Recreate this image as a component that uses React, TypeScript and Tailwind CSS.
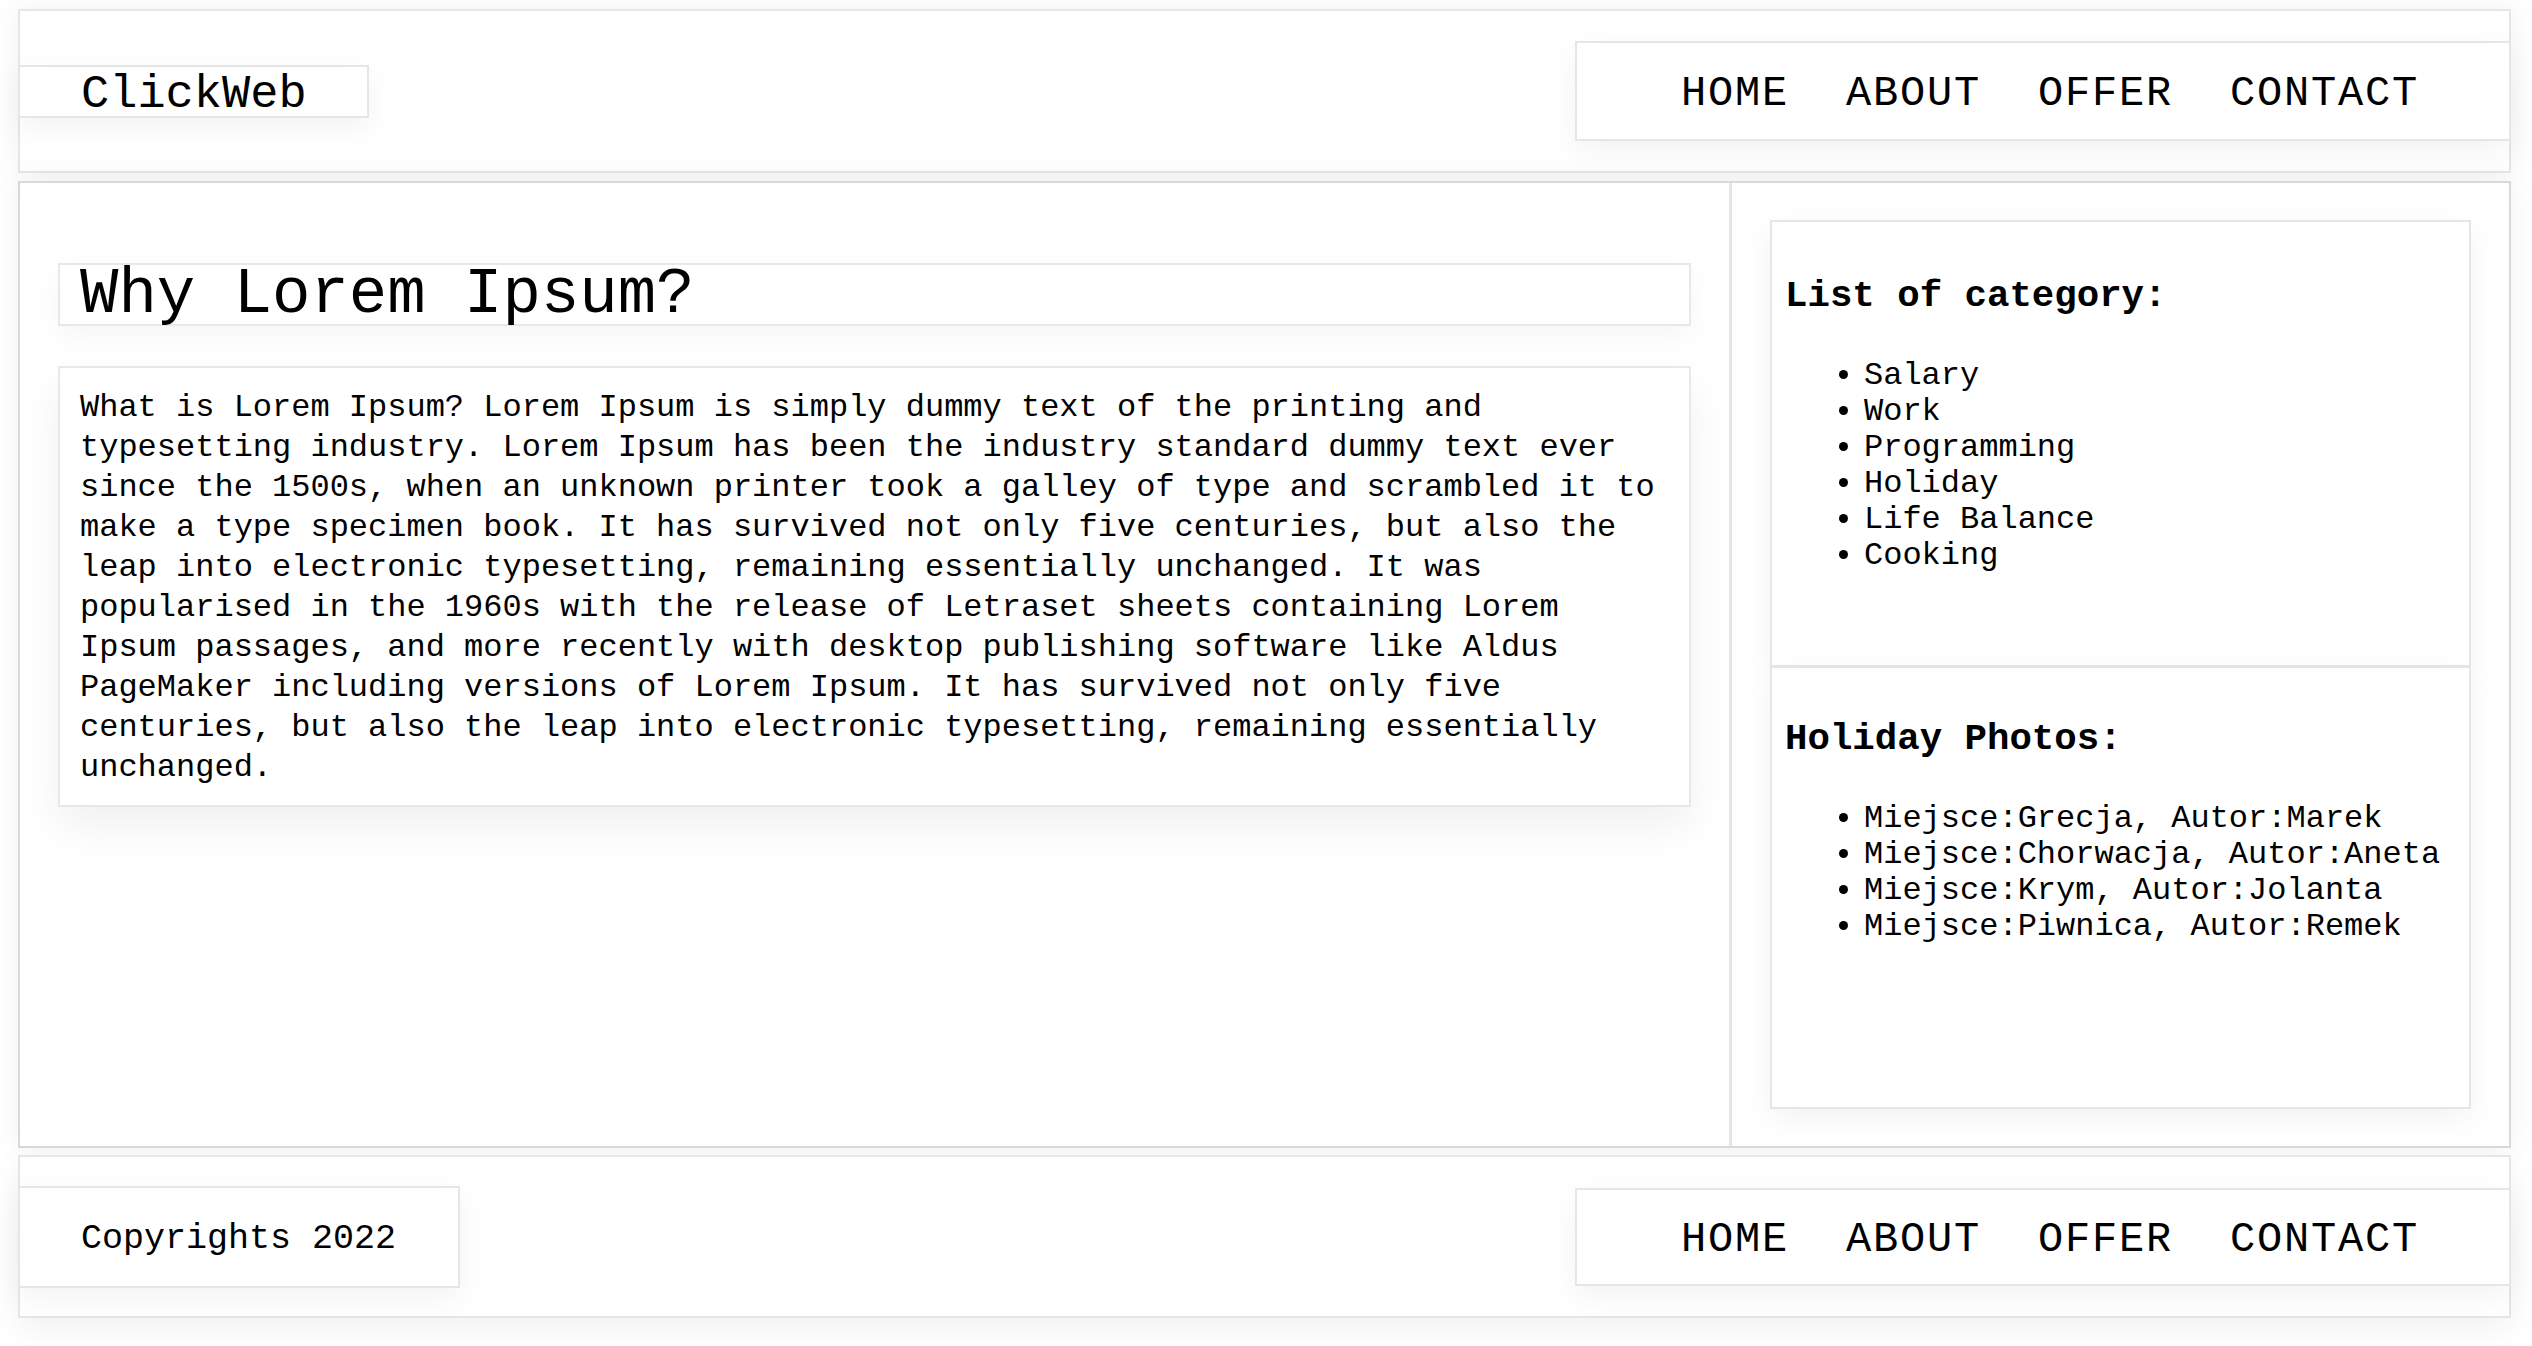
import React from "react";

const navItems = ["HOME", "ABOUT", "OFFER", "CONTACT"];

function Nav({ h }: { h: string }) {
  return (
    <nav
      className={`${h} -mr-[2px] flex w-[936px] items-center gap-[57px] border-2 border-[#e6e6e6] bg-white pl-[104px] pt-[6px] text-[42px] leading-none tracking-[1.8px] text-black shadow-[0_10px_30px_rgba(0,0,0,0.05)]`}
    >
      {navItems.map((n) => (
        <a key={n} href="#" className="text-black no-underline">
          {n}
        </a>
      ))}
    </nav>
  );
}

const paragraph =
  "What is Lorem Ipsum? Lorem Ipsum is simply dummy text of the printing and typesetting industry. Lorem Ipsum has been the industry standard dummy text ever since the 1500s, when an unknown printer took a galley of type and scrambled it to make a type specimen book. It has survived not only five centuries, but also the leap into electronic typesetting, remaining essentially unchanged. It was popularised in the 1960s with the release of Letraset sheets containing Lorem Ipsum passages, and more recently with desktop publishing software like Aldus PageMaker including versions of Lorem Ipsum. It has survived not only five centuries, but also the leap into electronic typesetting, remaining essentially unchanged.";

const categories = ["Salary", "Work", "Programming", "Holiday", "Life Balance", "Cooking"];
const photos = [
  "Miejsce:Grecja, Autor:Marek",
  "Miejsce:Chorwacja, Autor:Aneta",
  "Miejsce:Krym, Autor:Jolanta",
  "Miejsce:Piwnica, Autor:Remek",
];

function SideBox({ title, items, extra }: { title: string; items: string[]; extra?: string }) {
  return (
    <section className={`flex-1 border-2 border-[#e6e6e6] bg-white px-[13px] pb-[14px] shadow-[0_10px_30px_rgba(0,0,0,0.05)] ${extra ?? ""}`}>
      <h3 className="mt-[36px] mb-[41px] text-[37.4px] font-bold leading-[42px]">{title}</h3>
      <ul className="list-disc pl-[79px] text-[32px] leading-[36px]">
        {items.map((i) => (
          <li key={i}>{i}</li>
        ))}
      </ul>
    </section>
  );
}

export default function App() {
  return (
    <div
      className="min-h-screen w-full bg-white pt-[9px] pl-[18px] pr-[21px] pb-[28px] text-black"
      style={{ fontFamily: '"Liberation Mono", "Courier New", monospace' }}
    >
      {/* Header */}
      <header className="flex h-[164px] items-center justify-between border-2 border-[#e6e6e6] bg-white shadow-[0_0_30px_rgba(0,0,0,0.06)]">
        <div className="-ml-[2px] flex h-[53px] w-[351px] items-center border-2 border-[#e6e6e6] bg-white pl-[61px] pt-[6px] text-[47px] leading-none shadow-[0_10px_30px_rgba(0,0,0,0.05)]">
          ClickWeb
        </div>
        <Nav h="h-[100px]" />
      </header>

      {/* Main */}
      <main className="mt-[8px] flex h-[967px] border-2 border-[#d9d9d9] bg-white shadow-[0_0_30px_rgba(0,0,0,0.06)]">
        <div className="flex w-[1709px] flex-col pl-[38px] pr-[38px] pt-[80px]">
          <h1 className="flex h-[63px] items-center border-2 border-[#e8e8e8] bg-white pl-[20px] text-[64px] font-normal leading-none shadow-[0_10px_30px_rgba(0,0,0,0.04)]">
            Why Lorem Ipsum?
          </h1>
          <p className="mt-[40px] border-2 border-[#e8e8e8] bg-white pl-[20px] pr-[20px] pt-[20px] pb-[17px] text-[32px] leading-[40px] shadow-[0_20px_40px_rgba(0,0,0,0.06)]">
            {paragraph}
          </p>
        </div>
        <aside className="flex flex-1 flex-col border-l-[3px] border-[#e6e6e6] px-[38px] pt-[37px] pb-[37px]">
          <SideBox title="List of category:" items={categories} extra="border-b-[3px] pt-[17px]" />
          <SideBox title="Holiday Photos:" items={photos} extra="border-t-0 pt-[14px]" />
        </aside>
      </main>

      {/* Footer */}
      <footer className="mt-[7px] flex h-[163px] items-center justify-between border-2 border-[#e6e6e6] bg-white shadow-[0_10px_30px_rgba(0,0,0,0.06)]">
        <div className="-ml-[2px] flex h-[102px] w-[442px] items-center border-2 border-[#e6e6e6] bg-white pl-[61px] pt-[6px] text-[35px] leading-none shadow-[0_10px_30px_rgba(0,0,0,0.05)]">
          Copyrights 2022
        </div>
        <Nav h="h-[98px]" />
      </footer>
    </div>
  );
}
